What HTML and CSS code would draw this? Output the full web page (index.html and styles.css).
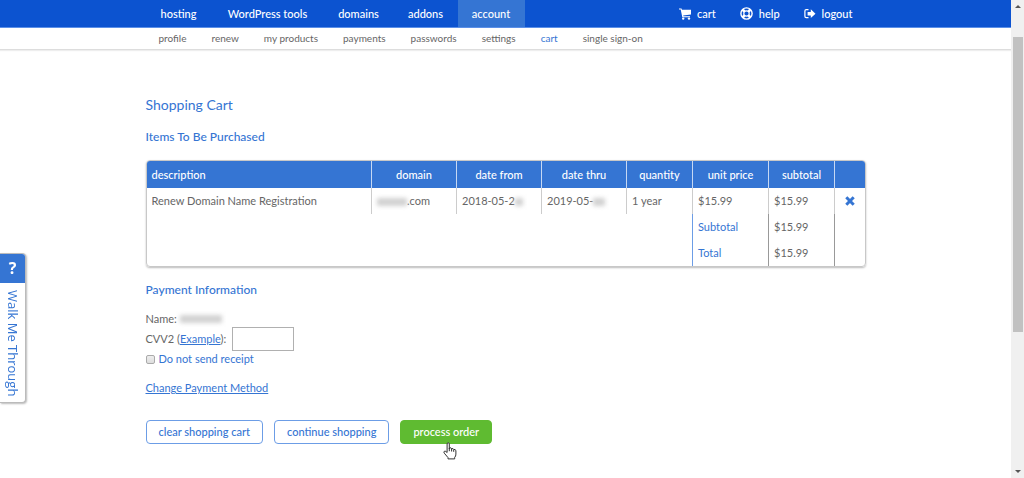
FILE: index.html
```html
<!DOCTYPE html>
<html lang="en">
<head>
<meta charset="utf-8">
<title>Shopping Cart</title>
<link rel="stylesheet" href="styles.css">
</head>
<body>
<div class="page">
  <header>
    <div class="topbar">
      <div class="container topbar-inner">
        <nav class="main-nav">
          <a href="#">hosting</a>
          <a href="#">WordPress tools</a>
          <a href="#">domains</a>
          <a href="#">addons</a>
          <a href="#" class="active">account</a>
        </nav>
        <nav class="user-nav">
          <a href="#"><svg width="12" height="12" viewBox="0 0 12 12" fill="currentColor"><path d="M0 .5h2.500l.4 1.200H12v4.800L4.200 7.500l.2.700H11v1.100H3.300L1.700 1.600H0z"/><circle cx="4.200" cy="10.600" r="1.200"/><circle cx="10" cy="10.600" r="1.200"/></svg>cart</a>
          <a href="#"><svg width="13" height="13" viewBox="0 0 13 13" fill="none" stroke="currentColor"><circle cx="6.500" cy="6.500" r="5.600" stroke-width="1.400"/><circle cx="6.500" cy="6.500" r="2.700" stroke-width="1.200"/><path d="M2.500 2.500l2 2M10.500 2.500l-2 2M2.500 10.500l2-2M10.500 10.500l-2-2" stroke-width="2.600"/></svg>help</a>
          <a href="#"><svg width="12" height="12" viewBox="0 0 12 12"><path d="M4.500 1.700H2.200Q.9 1.700.9 3v5.300q0 1.300 1.300 1.300h2.300" fill="none" stroke="currentColor" stroke-width="1.200"/><path d="M3.600 3.900h3.200V1.300l4.700 4.400-4.700 4.400V7.500H3.600z" fill="currentColor"/></svg>logout</a>
        </nav>
      </div>
    </div>
    <div class="subbar">
      <nav class="container sub-nav">
        <a href="#">profile</a>
        <a href="#">renew</a>
        <a href="#">my products</a>
        <a href="#">payments</a>
        <a href="#">passwords</a>
        <a href="#">settings</a>
        <a href="#" class="current">cart</a>
        <a href="#">single sign-on</a>
      </nav>
    </div>
  </header>
  <main class="container content">
    <h1>Shopping Cart</h1>
    <h2>Items To Be Purchased</h2>
    <div class="table-card">
      <table>
        <colgroup><col class="c-desc"><col class="c-date"><col class="c-date"><col class="c-date"><col class="c-sub"><col class="c-price"><col class="c-sub"><col class="c-remove"></colgroup>
        <thead>
          <tr><th class="left">description</th><th>domain</th><th>date from</th><th>date thru</th><th>quantity</th><th>unit price</th><th>subtotal</th><th></th></tr>
        </thead>
        <tbody>
          <tr>
            <td>Renew Domain Name Registration</td>
            <td><span class="smudge wide"></span>.com</td>
            <td>2018-05-2<span class="smudge narrow"></span></td>
            <td>2019-05-<span class="smudge small"></span></td>
            <td>1 year</td>
            <td>$15.99</td>
            <td>$15.99</td>
            <td><button class="remove" aria-label="Remove"><svg width="10" height="10" viewBox="0 0 10 10"><path d="M1.300 1.300l7.400 7.400M8.700 1.300L1.300 8.700" stroke="currentColor" stroke-width="3"/></svg></button></td>
          </tr>
          <tr class="sum"><td colspan="5"></td><td class="label">Subtotal</td><td>$15.99</td><td></td></tr>
          <tr class="sum"><td colspan="5"></td><td class="label">Total</td><td>$15.99</td><td></td></tr>
        </tbody>
      </table>
    </div>
    <h2>Payment Information</h2>
    <form class="payment">
      <div class="line">Name:&nbsp;<span class="smudge name"></span></div>
      <div class="line cvv"><label for="cvv">CVV2 (<a href="#">Example</a>):</label><input type="text" id="cvv"></div>
      <div class="line receipt"><input type="checkbox" id="receipt"><label for="receipt">Do not send receipt</label></div>
      <a class="change" href="#">Change Payment Method</a>
      <div class="actions">
        <button type="button">clear shopping cart</button>
        <button type="button">continue shopping</button>
        <button type="button" class="primary">process order</button>
      </div>
    </form>
  </main>
</div>
<div class="scrollbar"><div class="arrow up"></div><div class="thumb"></div><div class="arrow down"></div></div>
<button class="walkme"><span class="mark">?</span><span class="walk-text">Walk Me Through</span></button>
<svg class="pointer" width="14" height="18" viewBox="0 0 14 18"><path d="M4.100 10.500V2Q4.100.8 5.200.8T6.300 2v5l.3-1.100q1.700-.5 2 .8 1.700-.6 2.100.7 2-.3 2.200 1.400v3.300q0 2.200-1.200 3.200v1.600H5v-1.300L1.300 11.200q-.9-1.300 0-1.900.9-.5 1.700.3z" fill="#fff" stroke="#333" stroke-linejoin="round"/><path d="M6.300 6v3.200M8.600 6.600v2.900M10.700 7.500v2.300" stroke="#333"/></svg>
</body>
</html>
```
FILE: styles.css
```css
* { box-sizing: border-box; }
body {
  margin: 0;
  display: flex;
  min-height: 100vh;
  font: 11px/16px Lato, "Gill Sans", sans-serif;
  color: #666;
  background: #fff;
}
button, input { font: inherit; }
a { color: #3575d3; }
.page { flex: 1; }
.container { max-width: 720px; margin: 0 auto; }

.topbar { background: #0c53d0; border-bottom: 1px solid #5c90e8; }
.topbar-inner { display: flex; justify-content: space-between; }
.topbar a {
  color: #fff;
  text-decoration: none;
  font-weight: 500;
  line-height: 27px;
  text-align: center;
}
.main-nav { display: grid; grid-template-columns: 66px 112px 70px 64px 67px; }
.main-nav .active { background: #3575d3; }
.user-nav { display: flex; gap: 24px; padding-right: 13px; }
.user-nav a { display: flex; align-items: center; gap: 6px; }
.subbar { border-bottom: 1px solid #ddd; box-shadow: 0 1px 1px #eee; }
.sub-nav { display: flex; gap: 25px; padding: 0 13px; }
.sub-nav a { color: #666; text-decoration: none; font-size: 10px; line-height: 21px; }
.sub-nav .current { color: #3575d3; }

.content { padding-top: 45px; }
h1, h2 { margin: 0; font-weight: 400; color: #3575d3; }
h1 { font-size: 14px; line-height: 20px; margin-bottom: 13px; }
h2 { font-size: 12px; line-height: 18px; font-weight: 500; }
.table-card {
  margin: 14px 0;
  border: 1px solid #c8c8c8;
  border-radius: 4px;
  box-shadow: 0 1px 2px #bbb;
  overflow: hidden;
}
table { width: 100%; table-layout: fixed; border-collapse: collapse; }
.c-desc { width: 225px; }
.c-date { width: 85px; }
.c-sub { width: 66px; }
.c-price { width: 76px; }
.c-remove { width: 30px; }
th {
  height: 27px;
  padding: 0 5px;
  background: #3575d3;
  color: #fff;
  font-weight: 500;
  border-left: 1px solid #c6d8f3;
}
th.left { text-align: left; }
td { height: 26px; padding: 0 5px; border-left: 1px solid #ccc; white-space: nowrap; }
th:first-child, td:first-child { border-left: 0; }
.sum td { border-left-color: #999; }
.sum .label { color: #3575d3; border-left-color: #6c9de6; }
.remove { display: block; margin: 0 auto; padding: 0; border: 0; background: none; color: #3575d3; line-height: 10px; }
.remove svg { display: block; }
.smudge {
  display: inline-block;
  height: 8px;
  background: #d2d2d2;
  filter: blur(2px);
  vertical-align: middle;
}
.wide { width: 30px; }
.narrow { width: 8px; }
.small { width: 12px; }
.name { width: 42px; }

.line { display: flex; align-items: center; min-height: 16px; }
.payment { padding-top: 12px; }
.cvv { gap: 6px; }
.cvv input { width: 62px; height: 24px; border: 1px solid #b0b0b0; padding: 0 4px; }
.receipt { gap: 4px; color: #3575d3; }
.receipt input {
  appearance: none;
  width: 9px;
  height: 9px;
  margin: 0;
  border: 1px solid #aaa;
  border-radius: 2px;
  background: linear-gradient(#eee, #ddd);
}
.change { display: inline-block; margin-top: 13px; }
.actions { display: flex; gap: 11px; margin-top: 24px; }
.actions button {
  height: 24px;
  padding: 0 12px;
  border: 1px solid #6c9de6;
  border-radius: 4px;
  background: #fff;
  color: #3575d3;
  font-weight: 500;
}
.actions .primary { background: #5fbb31; border-color: #5fbb31; color: #fff; }

.scrollbar {
  width: 13px;
  padding: 5px 1px;
  display: flex;
  flex-direction: column;
  align-items: center;
  background: #f0f0f0;
}
.thumb { width: 10px; flex: 0 0 63%; margin-top: 29px; background: #c1c1c1; }
.arrow { border: 3px solid transparent; }
.up { border-top: 0; border-bottom-color: #555; }
.down { border-bottom: 0; border-top-color: #555; margin-top: auto; }

.walkme {
  position: fixed;
  left: 0;
  top: 253px;
  padding: 0;
  width: 26px;
  border: 1px solid #bbb;
  border-left: 0;
  border-radius: 0 4px 4px 0;
  box-shadow: 1px 1px 2px #bbb;
  background: #fff;
  color: #3575d3;
  overflow: hidden;
  font-family: "Open Sans", sans-serif;
}
.mark { display: block; background: #3575d3; color: #fff; font-size: 16px; font-weight: 700; line-height: 29px; }
.walk-text { display: block; writing-mode: vertical-rl; padding: 7px 0 6px; font-size: 13px; line-height: 25px; white-space: nowrap; }
.pointer { position: absolute; left: 443px; top: 442px; }
```
